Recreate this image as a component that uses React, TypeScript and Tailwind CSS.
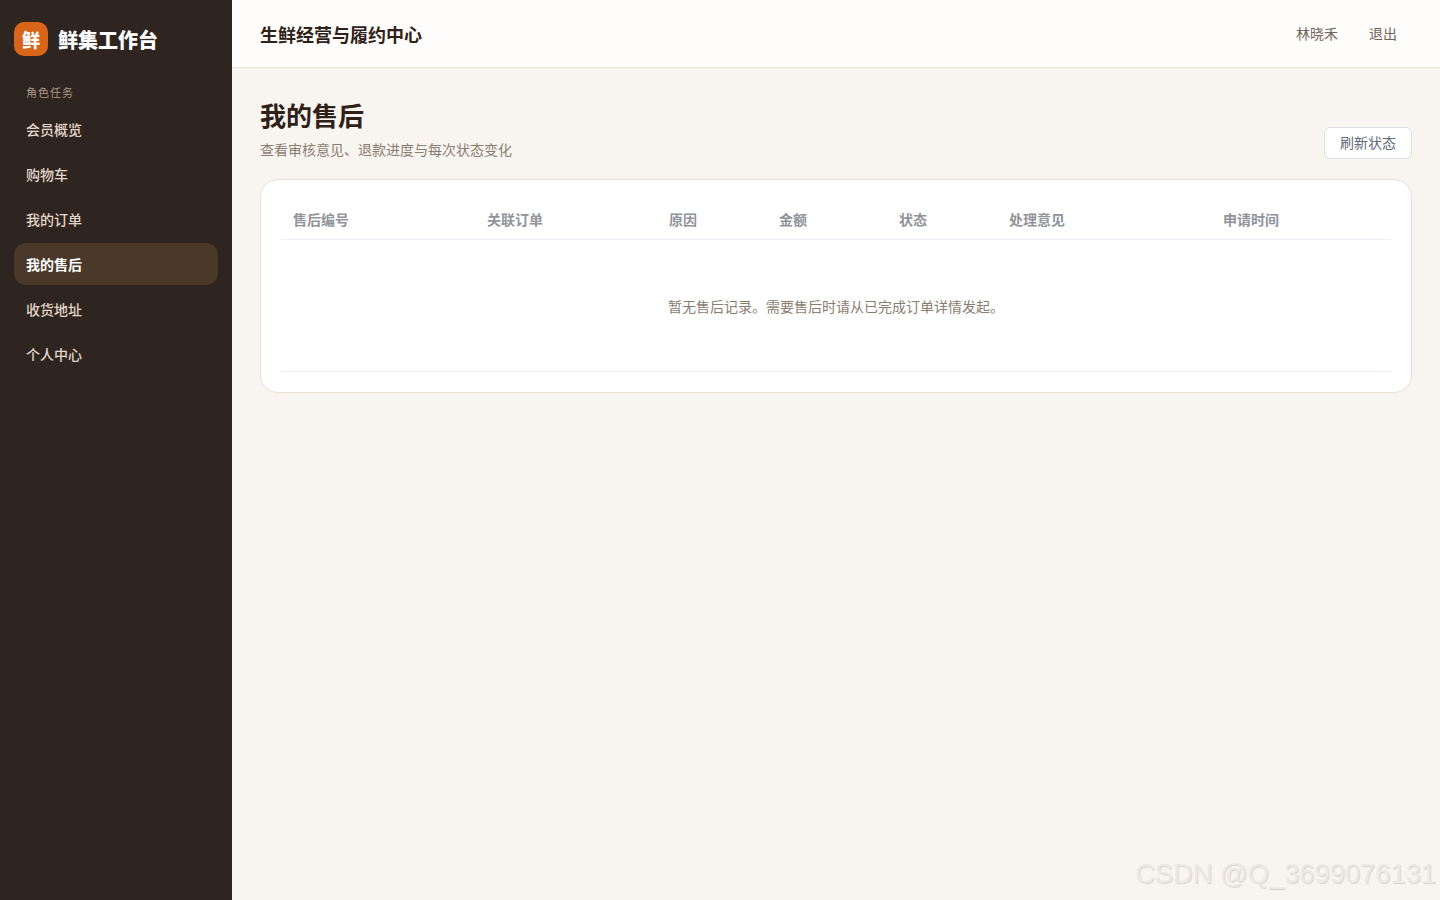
import React from 'react';

const navItems = ['会员概览', '购物车', '我的订单', '我的售后', '收货地址', '个人中心'];
const columns = [
  { label: '售后编号', width: 'w-[194px]' },
  { label: '关联订单', width: 'w-[182px]' },
  { label: '原因', width: 'w-[110px]' },
  { label: '金额', width: 'w-[120px]' },
  { label: '状态', width: 'w-[110px]' },
  { label: '处理意见', width: 'w-[214px]' },
  { label: '申请时间', width: 'w-[180px]' },
];

export default function App() {
  return (
    <div className="relative flex min-h-[900px] bg-[#f8f5f1] font-['DejaVu_Sans','Noto_Sans_CJK_SC',sans-serif]">
      <aside className="w-[232px] shrink-0 bg-[#2f2520] px-3.5 pt-[22px]">
        <div className="flex items-center gap-2.5">
          <div className="flex h-[34px] w-[34px] items-center justify-center rounded-[10px] bg-[#d9651a] pt-1 text-lg font-extrabold text-white">鲜</div>
          <div className="pt-1 text-xl font-extrabold text-white">鲜集工作台</div>
        </div>
        <div className="mt-[22px] px-3 text-[11px] leading-[32px] tracking-[1px] text-[#a89888]">角色任务</div>
        <nav className="mt-[-2px] flex flex-col gap-[3px]">
          {navItems.map((item) => (
            <div
              key={item}
              className={
                item === '我的售后'
                  ? 'flex h-[42px] items-center rounded-xl bg-[#4a382b] px-3 pt-0.5 text-sm font-semibold text-white'
                  : 'flex h-[42px] items-center rounded-xl px-3 pt-0.5 text-sm font-medium text-[#e2d6c8]'
              }
            >
              {item}
            </div>
          ))}
        </nav>
      </aside>

      <div className="flex min-w-0 flex-1 flex-col">
        <header className="flex h-[68px] items-center justify-between border-b border-[#eae2da] bg-[#fffdfb] pl-7 pr-[43px]">
          <div className="pt-1 text-lg font-bold text-[#2f2118]">生鲜经营与履约中心</div>
          <div className="flex items-center gap-[31px] text-sm text-[#6f655d]">
            <span>林晓禾</span>
            <span>退出</span>
          </div>
        </header>

        <main className="px-7 pt-[30px]">
          <div className="flex items-end justify-between">
            <div>
              <h1 className="text-[26px] leading-[38px] font-bold text-[#2f2118]">我的售后</h1>
              <p className="mt-[3px] text-sm leading-[22px] text-[#8a7d70]">查看审核意见、退款进度与每次状态变化</p>
            </div>
            <button className="mb-0.5 h-8 w-[88px] rounded-md border border-[#dcdfe6] bg-white text-sm text-[#5f6b7a]">刷新状态</button>
          </div>

          <section className="mt-[18px] rounded-[18px] border border-[#e9e0d6] bg-white p-5">
            <table className="w-full table-fixed border-collapse">
              <thead>
                <tr className="h-[39px] border-b border-[#ebeef5]">
                  {columns.map((col) => (
                    <th key={col.label} className={`${col.width} px-3 pt-0.5 text-left text-sm font-bold text-[#909399]`}>
                      {col.label}
                    </th>
                  ))}
                </tr>
              </thead>
              <tbody>
                <tr className="h-[132px] border-b border-[#ebeef5]">
                  <td colSpan={7} className="pt-[3px] text-center text-sm text-[#8a7d70]">
                    暂无售后记录。需要售后时请从已完成订单详情发起。
                  </td>
                </tr>
              </tbody>
            </table>
          </section>
        </main>
      </div>

      <div className="absolute right-[4px] bottom-[7px] text-[27.3px] leading-[38px] font-['Liberation_Sans',sans-serif] text-[#ebe9e6] [text-shadow:1px_1px_1px_#d6d4d1]">
        CSDN @Q_3699076131
      </div>
    </div>
  );
}
